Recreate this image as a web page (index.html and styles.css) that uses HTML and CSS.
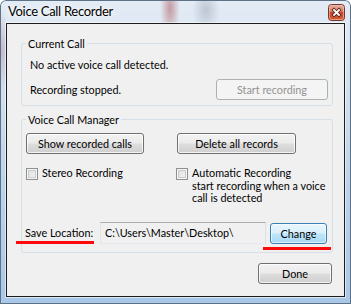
FILE: index.html
```html
<!DOCTYPE html>
<html>
<head>
<meta charset="utf-8">
<link rel="stylesheet" href="styles.css">
</head>
<body>
<div class="window">
  <div class="titlebar">
    <span class="title">Voice Call Recorder</span>
    <span class="close">
      <svg width="17" height="17" viewBox="0 0 17 17">
        <defs>
          <linearGradient id="cg" x1="0" y1="0" x2="0" y2="1">
            <stop offset="0" stop-color="#eab1a2"/>
            <stop offset=".45" stop-color="#d77a66"/>
            <stop offset=".5" stop-color="#c5452d"/>
            <stop offset="1" stop-color="#d65f36"/>
          </linearGradient>
        </defs>
        <rect x=".5" y=".5" width="16" height="16" rx="3" fill="url(#cg)" stroke="#7a3327"/>
        <rect x="1.5" y="1.5" width="14" height="14" rx="2" fill="none" stroke="#f3c9bd" stroke-opacity=".6"/>
        <path d="M6 6 L11 11 M11 6 L6 11" stroke="#5a2117" stroke-width="3.4" stroke-linecap="square"/>
        <path d="M6 6 L11 11 M11 6 L6 11" stroke="#ffffff" stroke-width="1.8" stroke-linecap="square"/>
      </svg>
    </span>
  </div>
  <div class="client">
    <fieldset class="group g1">
      <legend>Current Call</legend>
      <div class="status">No active voice call detected.</div>
      <div class="row">
        <span class="rec">Recording stopped.</span>
        <button class="btn disabled start">Start recording</button>
      </div>
    </fieldset>
    <fieldset class="group g2">
      <legend>Voice Call Manager</legend>
      <div class="manager">
        <button class="btn show">Show recorded calls</button>
        <button class="btn del">Delete all records</button>
        <label class="check"><span class="box"></span><span class="ctext">Stereo Recording</span></label>
        <label class="check auto"><span class="box"></span><span class="ctext">Automatic Recording<br>start recording when a voice<br>call is detected</span></label>
      </div>
      <div class="save">
        <span class="save-label">Save Location:</span>
        <div class="path">C:\Users\Master\Desktop\</div>
        <button class="btn focus change">Change</button>
      </div>
    </fieldset>
    <div class="footer">
      <button class="btn done">Done</button>
    </div>
  </div>
  <span class="mark mark-left"></span>
  <span class="mark mark-right"></span>
</div>
</body>
</html>
```
FILE: styles.css
```css
html, body {
  margin: 0;
  padding: 0;
  background: #ffffff;
}

body {
  --fs: 10.8px;
  font-family: Lato, "Open Sans", sans-serif;
  font-size: var(--fs);
  color: #000;
}

.window {
  position: relative;
  width: 351px;
  height: 304px;
  box-sizing: border-box;
  padding: 0 6px 7px 6px;
  display: flex;
  flex-direction: column;
  border-radius: 6px 6px 0 0;
  background:
    radial-gradient(ellipse 10px 30px at 170px 8px, rgba(170, 90, 95, 0.55), rgba(170, 90, 95, 0) 100%),
    radial-gradient(ellipse 14px 22px at 206px 10px, rgba(120, 130, 150, 0.35), rgba(120, 130, 150, 0) 100%),
    radial-gradient(ellipse 8px 40px at 2px 50px, rgba(170, 130, 160, 0.45), rgba(170, 130, 160, 0) 100%),
    linear-gradient(to bottom, #e4ecf5 0%, #d3e1ef 25%, #bcd3eb 60%, #a9c7e8 100%);
  box-shadow: inset 0 0 0 1px #5e7287;
}

.titlebar {
  height: 23px;
  display: flex;
  align-items: flex-start;
}

.title {
  margin-top: 3px;
  padding-left: 2px;
  font-size: 13px;
  letter-spacing: -0.3px;
  line-height: 17px;
  text-shadow: 0 0 6px #fff, 0 0 3px #fff;
}

.close {
  margin-left: auto;
  margin-top: 4px;
  width: 17px;
  height: 17px;
  display: block;
}

.close svg {
  display: block;
}

.client {
  flex: 1;
  display: flex;
  flex-direction: column;
  background: #f0f0f0;
  border: 1px solid #1c1c1c;
  box-shadow: 0 0 0 1px rgba(255, 255, 255, 0.55);
}

.group {
  border: 1px solid #d5dfe5;
  border-radius: 3px;
  min-width: 0;
}

.group legend {
  padding: 0 2px;
  line-height: 15px;
}

.g1 {
  margin: 12px 11px 0 14px;
  padding: 0 4px 5px 8px;
}

.g1 legend {
  margin-left: -4px;
}

.status {
  margin-top: 6px;
  line-height: 16px;
}

.row {
  margin-top: 6px;
  display: flex;
  align-items: center;
  height: 21px;
}

.rec {
  line-height: 16px;
}

.btn {
  font-family: inherit;
  font-size: var(--fs);
  color: #000;
  height: 21px;
  padding: 0;
  box-sizing: border-box;
  border: 1px solid #707070;
  border-radius: 3px;
  background: linear-gradient(to bottom, #f2f2f2 0%, #ebebeb 48%, #dddddd 52%, #cfcfcf 100%);
  box-shadow: inset 0 0 0 1px rgba(255, 255, 255, 0.75);
}

.btn.disabled {
  border-color: #adb2b5;
  background: #f4f4f4;
  color: #929292;
  box-shadow: none;
}

.btn.focus {
  border-color: #3c7fb1;
  background: linear-gradient(to bottom, #eaf6fd 0%, #d9f0fc 48%, #bee6fd 52%, #a7d9f5 100%);
  box-shadow: inset 0 0 0 1px rgba(255, 255, 255, 0.6);
}

.start {
  margin-left: auto;
  width: 112px;
}

.g2 {
  margin: 6px 11px 0 14px;
  padding: 0 5px 8px 4px;
}

.manager {
  margin-top: 6px;
  display: grid;
  grid-template-columns: 151px 1fr;
  row-gap: 13px;
  align-items: start;
}

.show {
  width: 118px;
}

.del {
  width: 119px;
}

.check {
  display: flex;
  align-items: flex-start;
  gap: 4px;
  line-height: 12.5px;
  white-space: nowrap;
}

.check.auto {
  margin-left: -1px;
}

.box {
  flex: 0 0 auto;
  width: 12px;
  height: 12px;
  margin-top: 1px;
  box-sizing: border-box;
  border: 1px solid #8e8f8f;
  background: linear-gradient(135deg, #d9d9d9 0%, #ececec 60%, #f8f8f8 100%);
  box-shadow: inset 0 0 0 1px #f6f6f6, inset 0 0 0 2px #c9cbcd;
}

.save {
  margin-top: 17.5px;
  display: flex;
  align-items: center;
  height: 22px;
}

.save-label {
  margin-left: -1px;
  width: 75px;
  flex: 0 0 75px;
  line-height: 16px;
}

.path {
  width: 166px;
  height: 22px;
  box-sizing: border-box;
  border: 1px solid;
  border-color: #abadb3 #dbdfe6 #e3e9ef #e2e3ea;
  padding-left: 4px;
  line-height: 20px;
  background: #f0f0f0;
}

.change {
  margin-left: auto;
  width: 57px;
}

.footer {
  display: flex;
  justify-content: flex-end;
  margin: 10px 12px 0 0;
}

.done {
  width: 74px;
}

.mark {
  position: absolute;
  height: 3px;
  background: #ff0a0a;
}

.mark-left {
  left: 16px;
  top: 241px;
  width: 78px;
}

.mark-right {
  left: 263px;
  top: 247px;
  width: 68px;
}
```
